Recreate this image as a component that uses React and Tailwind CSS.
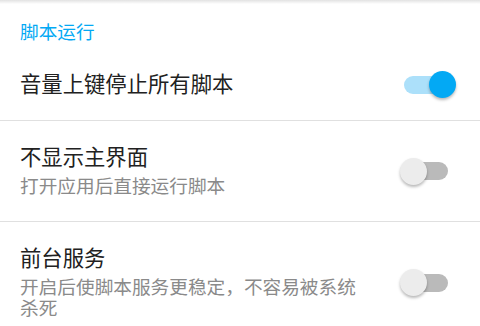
const Toggle = ({on}) => {
    return (
        <div className="relative w-[56px] h-[27px] shrink-0 ml-[35px]">
            <div className={"absolute left-[4px] top-[4.5px] w-[44px] h-[18px] rounded-full " + (on ? "bg-[#ace0fa]" : "bg-[#bababa]")}></div>
            <div className={"absolute top-0 w-[27px] h-[27px] rounded-full shadow-[0_2px_3px_rgba(0,0,0,0.28)] " + (on ? "left-[29px] bg-[#03a9f4]" : "left-0 bg-[#ececec]")}></div>
        </div>
    )
};

const Row = ({title, sub, on, className}) => {
    return (
        <div className={"flex pl-[20px] pr-[24px] " + className}>
            <div className="flex-1 min-w-0">
                <div className="text-[21.33px] leading-[28px] text-[#212121]">{title}</div>
                {sub && (
                    <div className="mt-[5px] text-[18.67px] leading-[21px] text-[#8a8a8a]">{sub}</div>
                )}
            </div>
            <Toggle on={on}/>
        </div>
    )
};

const App = () => {
    return (
        <div className="w-[480px] h-[326px] overflow-hidden bg-white" style={{fontFamily: 'Roboto, "Noto Sans CJK SC", sans-serif'}}>
            <div className="h-[4px] bg-gradient-to-b from-[#e2e2e2] to-white"></div>
            <div className="pl-[20px] pt-[17px] text-[18.67px] leading-[24px] text-[#03a9f4]">
                脚本运行
            </div>
            <Row title="音量上键停止所有脚本" on={true} className="h-[75px] pt-[4px] items-center"/>
            <div className="h-px bg-[#e0e0e0]"></div>
            <Row title="不显示主界面" sub="打开应用后直接运行脚本" on={false} className="h-[100px] items-center"/>
            <div className="h-px bg-[#e0e0e0]"></div>
            <Row title="前台服务" sub="开启后使脚本服务更稳定，不容易被系统杀死" on={false} className="pt-[23px] items-center"/>
        </div>
    )
};
export default App;
